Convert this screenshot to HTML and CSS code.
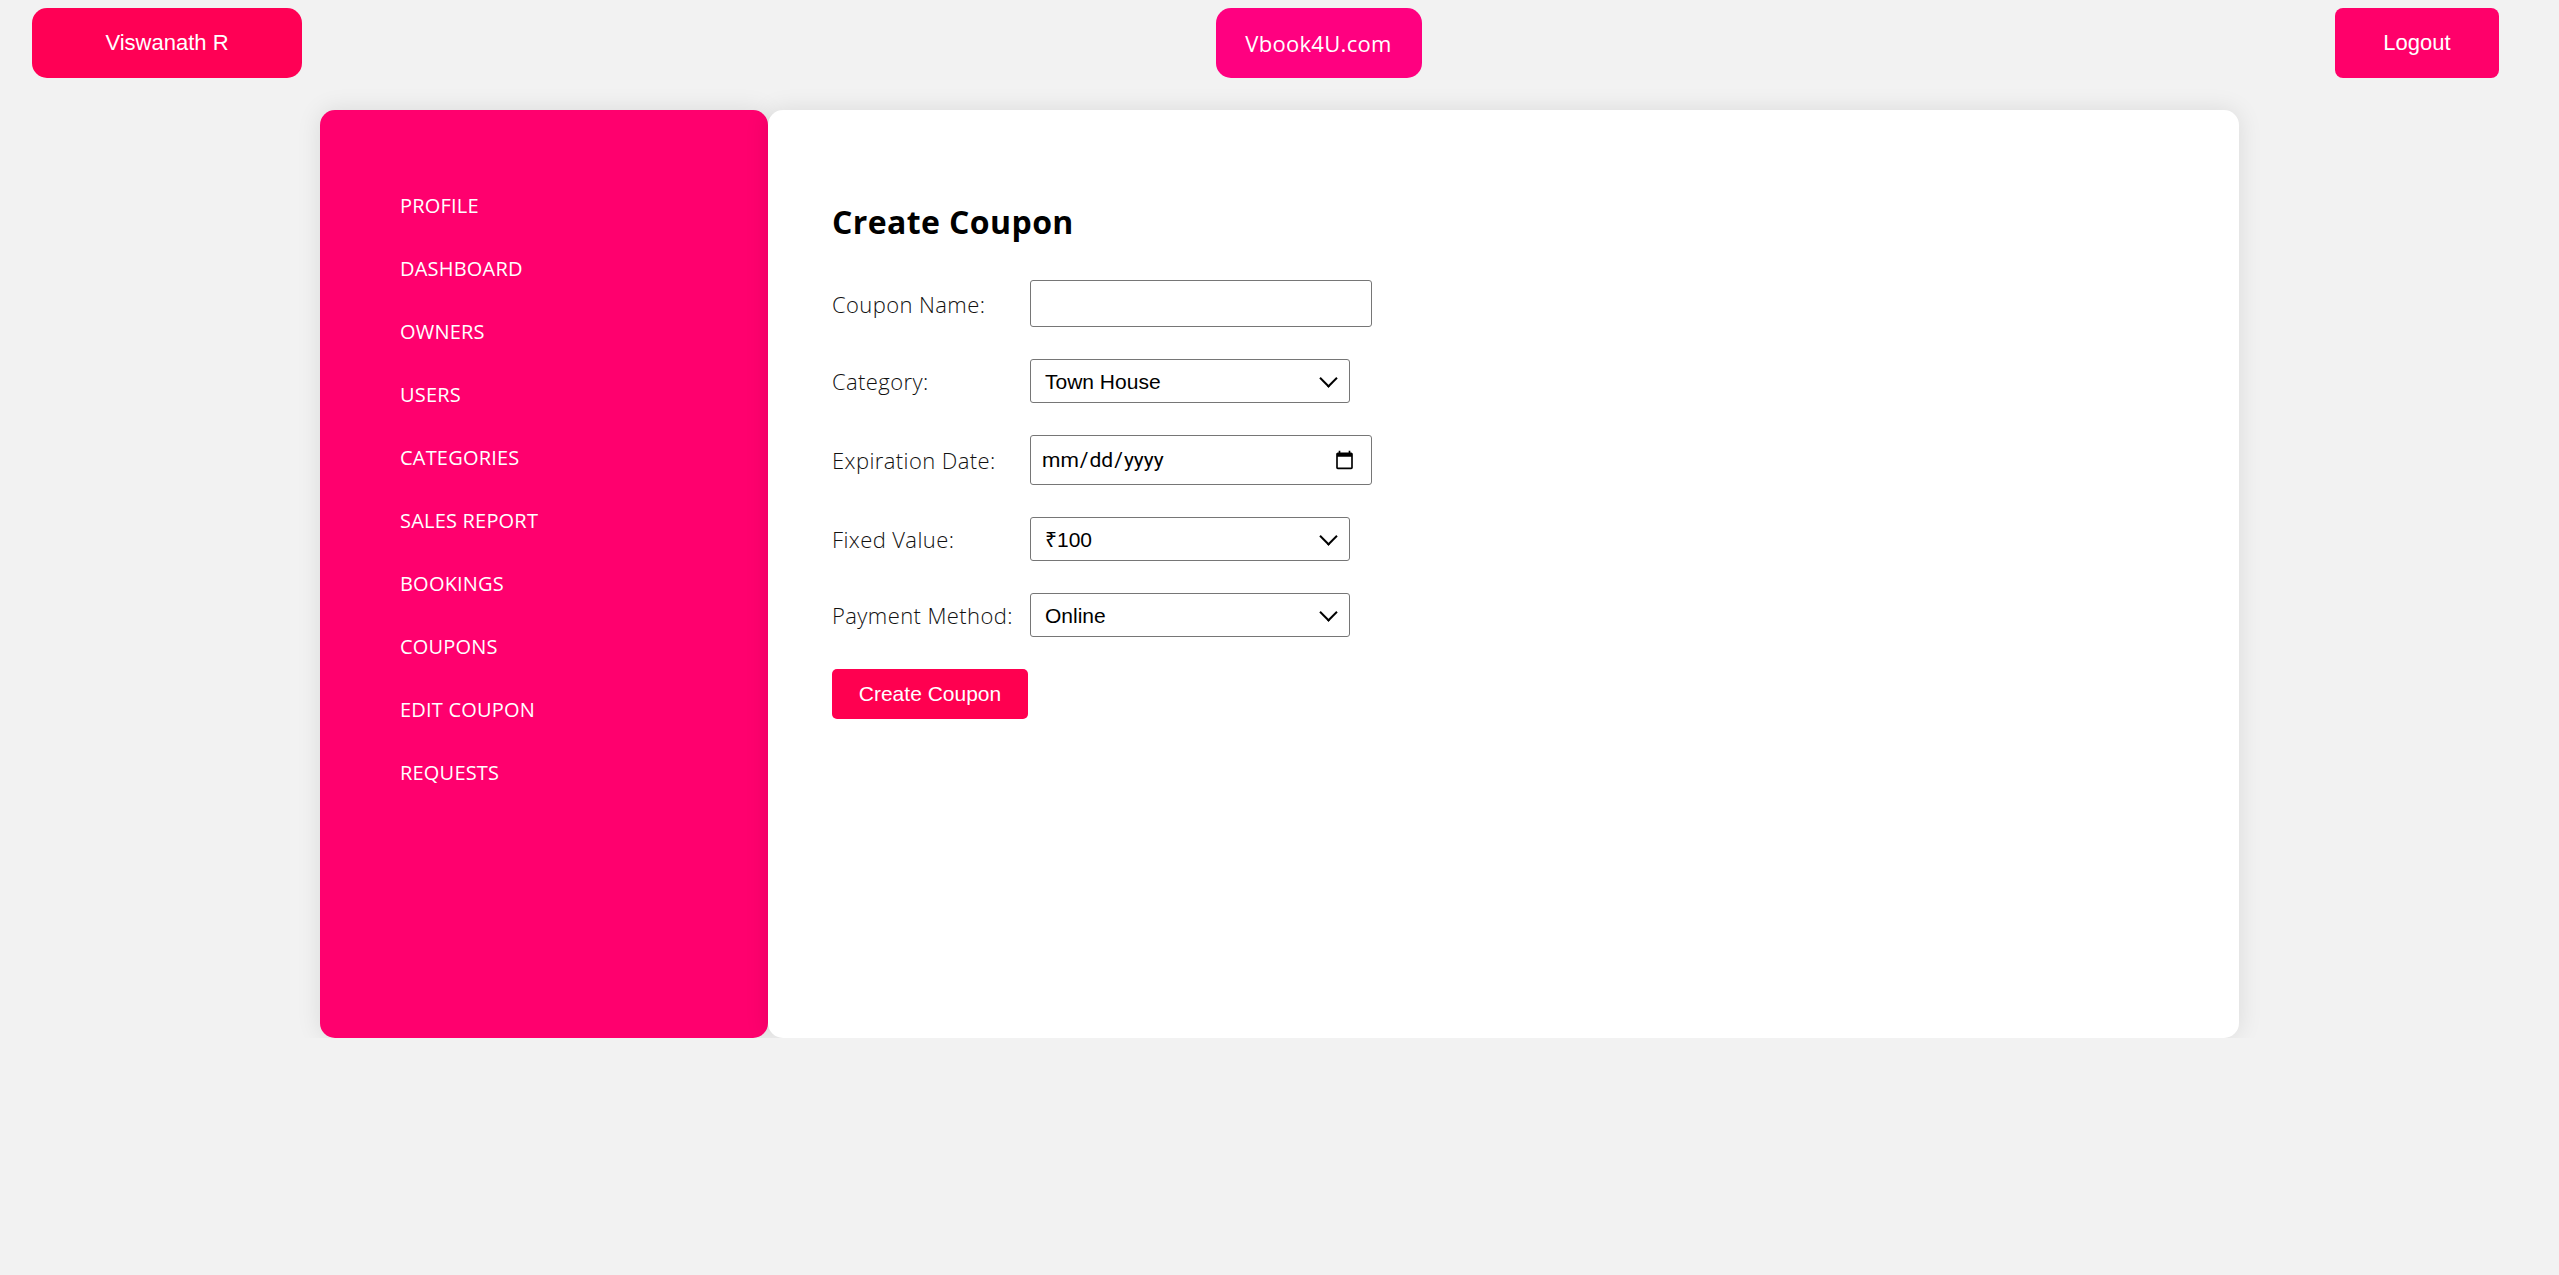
FILE: index.html
```html
<!DOCTYPE html>
<html lang="en">
<head>
<meta charset="utf-8">
<title>Create Coupon</title>
<link rel="stylesheet" href="styles.css">
</head>
<body>
<header class="topbar">
  <button class="top-btn user-btn">Viswanath R</button>
  <button class="top-btn brand-btn">Vbook4U.com</button>
  <button class="top-btn logout-btn">Logout</button>
</header>
<main class="container">
  <nav class="sidebar">
    <ul class="menu">
      <li>PROFILE</li>
      <li>DASHBOARD</li>
      <li>OWNERS</li>
      <li>USERS</li>
      <li>CATEGORIES</li>
      <li>SALES REPORT</li>
      <li>BOOKINGS</li>
      <li>COUPONS</li>
      <li>EDIT COUPON</li>
      <li>REQUESTS</li>
    </ul>
  </nav>
  <section class="content">
    <h2 class="title">Create Coupon</h2>
    <form class="form">
      <div class="row">
        <label class="label">Coupon Name:</label>
        <input class="field text-field" type="text">
      </div>
      <div class="row">
        <label class="label">Category:</label>
        <span class="select-wrap">
          <select class="field select-field">
            <option>Town House</option>
          </select>
        </span>
      </div>
      <div class="row">
        <label class="label">Expiration Date:</label>
        <input class="field date-field" type="date">
      </div>
      <div class="row">
        <label class="label">Fixed Value:</label>
        <span class="select-wrap">
          <select class="field select-field">
            <option>₹100</option>
          </select>
        </span>
      </div>
      <div class="row">
        <label class="label">Payment Method:</label>
        <span class="select-wrap">
          <select class="field select-field">
            <option>Online</option>
          </select>
        </span>
      </div>
      <div class="row">
        <button type="button" class="submit-btn">Create Coupon</button>
      </div>
    </form>
  </section>
</main>
</body>
</html>
```
FILE: styles.css
```css
* { box-sizing: border-box; }
html, body { margin: 0; padding: 0; }
body {
  background: #f2f2f2;
  font-family: "Open Sans", "Noto Sans", sans-serif;
  color: #000;
}
.topbar {
  display: flex;
  justify-content: space-between;
  align-items: flex-start;
  padding: 8px 60px 0 32px;
}
.top-btn {
  border: none;
  color: #fff;
  height: 70px;
  cursor: pointer;
}
.user-btn {
  width: 270px;
  background: #ff0055;
  border-radius: 15px;
  font-family: "Liberation Sans", Arial, sans-serif;
  font-size: 22px;
}
.brand-btn {
  width: 206px;
  background: #ff0080;
  border-radius: 15px;
  font-family: "Open Sans", sans-serif;
  font-size: 22px;
  font-weight: 400;
  letter-spacing: 0.3px;
}
.logout-btn {
  width: 164px;
  background: #ff006a;
  border-radius: 8px;
  font-family: "Liberation Sans", Arial, sans-serif;
  font-size: 22px;
}
.container {
  width: 1919px;
  margin: 32px auto 0;
  display: flex;
  height: 928px;
}
.sidebar {
  width: 448px;
  background: #ff006e;
  border-radius: 15px;
  box-shadow: 0 0 24px rgba(0,0,0,0.10);
  padding: 81px 0 0 80px;
}
.menu {
  list-style: none;
  margin: 0;
  padding: 0;
  display: flex;
  flex-direction: column;
  gap: 33px;
}
.menu li {
  color: #fff;
  font-size: 20px;
  line-height: 30px;
  font-weight: 400;
  letter-spacing: 0.2px;
}
.content {
  flex: 1;
  background: #fff;
  border-radius: 15px;
  box-shadow: 0 0 24px rgba(0,0,0,0.10);
  padding: 88px 60px 0 64px;
}
.title {
  margin: 0 0 34px;
  font-size: 32px;
  line-height: 48px;
  font-weight: 700;
  letter-spacing: 0.4px;
}
.form {
  display: flex;
  flex-direction: column;
  gap: 32px;
}
.row {
  display: flex;
  align-items: center;
}
.label {
  width: 198px;
  font-size: 22px;
  font-weight: 300;
  letter-spacing: 0.4px;
  color: #111;
}
.field {
  border: 1px solid #767676;
  border-radius: 3px;
  background: #fff;
  font-family: "Liberation Sans", Arial, sans-serif;
  font-size: 21px;
  color: #000;
}
.text-field {
  width: 342px;
  height: 47px;
}
.select-wrap {
  position: relative;
  display: inline-block;
}
.select-wrap::after {
  content: "";
  position: absolute;
  right: 15px;
  top: 13px;
  width: 11px;
  height: 11px;
  border-right: 2.5px solid #000;
  border-bottom: 2.5px solid #000;
  transform: rotate(45deg);
  pointer-events: none;
}
.select-field {
  display: block;
  width: 320px;
  height: 44px;
  padding-left: 14px;
  appearance: none;
  -webkit-appearance: none;
}
.date-field {
  width: 342px;
  height: 50px;
  padding: 0 14px 0 10px;
  font-family: Roboto, "Liberation Sans", sans-serif;
  font-size: 21px;
}
.submit-btn {
  width: 196px;
  height: 50px;
  border: none;
  border-radius: 5px;
  background: #ff0050;
  color: #fff;
  font-family: "Liberation Sans", Arial, sans-serif;
  font-size: 21px;
}
```
